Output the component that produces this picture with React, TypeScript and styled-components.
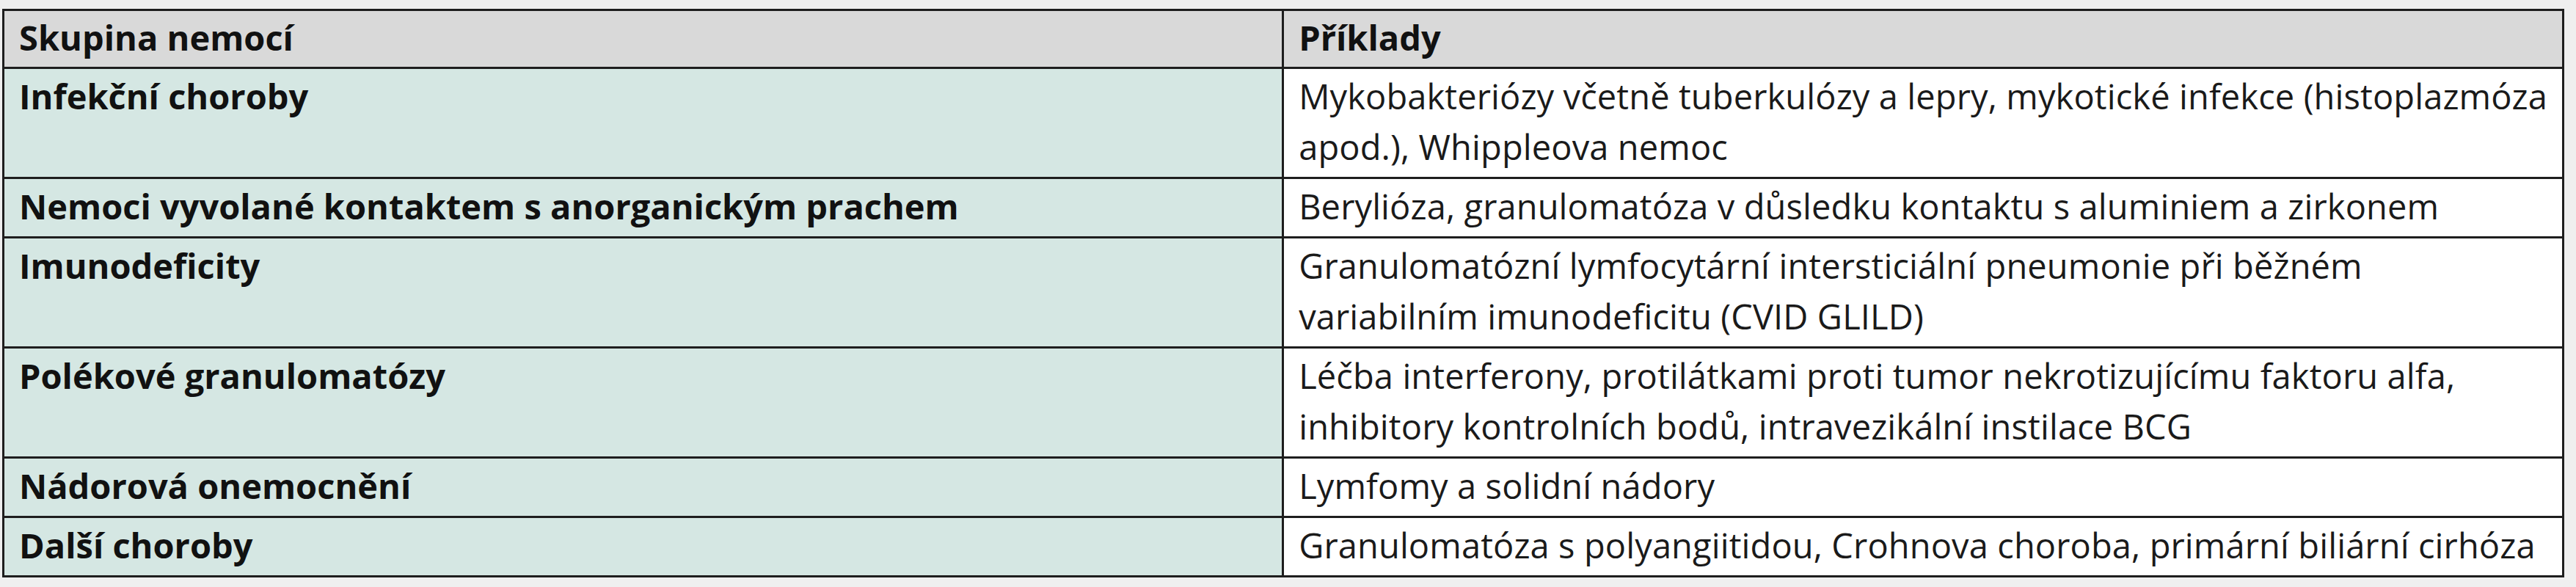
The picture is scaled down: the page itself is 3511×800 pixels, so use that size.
import styled, { createGlobalStyle } from "styled-components";

const GlobalStyle = createGlobalStyle`
  body {
    margin: 0;
    background: #efefef;
    font-family: "Open Sans", "Noto Sans", sans-serif;
  }
`;

const Page = styled.div`
  padding: 12px 0 0 3px;
`;

const Table = styled.table`
  width: 3492px;
  border-collapse: collapse;
  border: 3px solid #1e1e1e;
`;

const HeadCell = styled.th`
  background: #d9d9d9;
  border: 3px solid #1e1e1e;
  padding: 2px 20px 5px;
  text-align: left;
  font-size: 47px;
  font-weight: 700;
  line-height: 69px;
  color: #111;
  white-space: nowrap;
`;

const GroupCell = styled.td`
  width: 1703px;
  background: #d5e7e3;
  border: 3px solid #1e1e1e;
  padding: 3px 20px 6px;
  vertical-align: top;
  font-size: 47px;
  font-weight: 700;
  line-height: 69px;
  color: #111;
  white-space: nowrap;
`;

const ExampleCell = styled.td`
  background: #ffffff;
  border: 3px solid #1e1e1e;
  padding: 3px 20px 6px;
  vertical-align: top;
  font-size: 47px;
  font-weight: 400;
  line-height: 69px;
  letter-spacing: 0.12px;
  color: #1a1a1a;
  white-space: nowrap;
`;

interface Row {
  group: string;
  examples: string[];
}

const rows: Row[] = [
  {
    group: "Infekční choroby",
    examples: [
      "Mykobakteriózy včetně tuberkulózy a lepry, mykotické infekce (histoplazmóza",
      "apod.), Whippleova nemoc",
    ],
  },
  {
    group: "Nemoci vyvolané kontaktem s anorganickým prachem",
    examples: ["Berylióza, granulomatóza v důsledku kontaktu s aluminiem a zirkonem"],
  },
  {
    group: "Imunodeficity",
    examples: [
      "Granulomatózní lymfocytární intersticiální pneumonie při běžném",
      "variabilním imunodeficitu (CVID GLILD)",
    ],
  },
  {
    group: "Polékové granulomatózy",
    examples: [
      "Léčba interferony, protilátkami proti tumor nekrotizujícímu faktoru alfa,",
      "inhibitory kontrolních bodů, intravezikální instilace BCG",
    ],
  },
  {
    group: "Nádorová onemocnění",
    examples: ["Lymfomy a solidní nádory"],
  },
  {
    group: "Další choroby",
    examples: ["Granulomatóza s polyangiitidou, Crohnova choroba, primární biliární cirhóza"],
  },
];

const App = () => {
  return (
    <Page>
      <GlobalStyle />
      <Table>
        <thead>
          <tr>
            <HeadCell>Skupina nemocí</HeadCell>
            <HeadCell>Příklady</HeadCell>
          </tr>
        </thead>
        <tbody>
          {rows.map((row) => (
            <tr key={row.group}>
              <GroupCell>{row.group}</GroupCell>
              <ExampleCell>
                {row.examples.map((line, i) => (
                  <span key={i}>
                    {i > 0 && <br />}
                    {line}
                  </span>
                ))}
              </ExampleCell>
            </tr>
          ))}
        </tbody>
      </Table>
    </Page>
  );
};

export default App;
